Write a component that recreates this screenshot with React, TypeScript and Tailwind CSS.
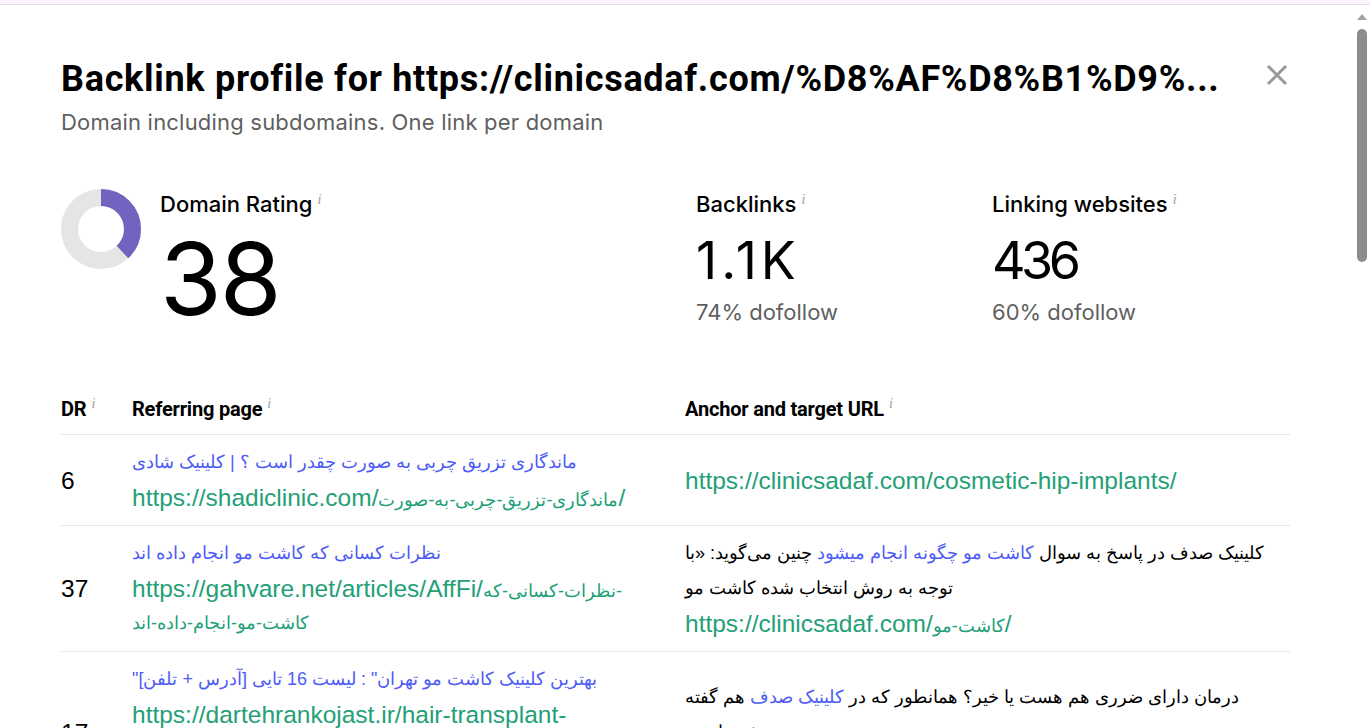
import React from 'react';

const InfoMark = () => (
  <span className="ml-[5px] relative -top-[8px] text-[14px] italic font-normal text-[#a0a0a0] font-['Liberation_Serif',serif]">
    i
  </span>
);

const Donut = ({ value }: { value: number }) => {
  const r = 31.5;
  const c = 2 * Math.PI * r;
  return (
    <svg width="80" height="80" viewBox="0 0 80 80" className="shrink-0">
      <circle cx="40" cy="40" r={r} fill="none" stroke="#e5e5e5" strokeWidth="17" />
      <circle
        cx="40"
        cy="40"
        r={r}
        fill="none"
        stroke="#7462c1"
        strokeWidth="17"
        strokeDasharray={`${(value / 100) * c} ${c}`}
        transform="rotate(-90 40 40)"
      />
    </svg>
  );
};

const Scrollbar = () => (
  <div className="w-[16px] shrink-0 bg-white flex flex-col items-center">
    <div className="mt-[9px] w-0 h-0 border-l-[5px] border-r-[5px] border-b-[6px] border-l-transparent border-r-transparent border-b-[#a3a3a3]" />
    <div className="mt-[9px] w-[10px] h-[233px] rounded-full bg-[#8c8c8c]" />
  </div>
);

const blue = 'text-[#4d5cf6]';
const green = 'text-[#23a077]';

// persian runs fall back to a wider font, so they get a smaller size
const Fa = ({ children, className = '' }: { children: React.ReactNode; className?: string }) => (
  <span className={`text-[18px] leading-none ${className}`}>{children}</span>
);

const cell = 'border-b border-[#e6e6e6] py-[10px] text-[24.5px] leading-[35px]';
const line = 'h-[35px] whitespace-nowrap';
const faLine = 'h-[35px] whitespace-nowrap text-[18px] leading-[35px]';
const head = 'pb-[10px] border-b border-[#e6e6e6] text-[20px] leading-[24px] font-bold tracking-[-0.2px] font-[Roboto,sans-serif]';

export default function App() {
  return (
    <div className="h-[728px] overflow-hidden bg-white flex flex-col">
      <div className="h-[5px] shrink-0 bg-[#fcf3fc] border-b border-[#e3dee5]" />
      <div className="flex flex-1 min-h-0">
        <main className="flex-1 min-w-0 pl-[61px] pr-[64px] pt-[51px]">
          {/* header */}
          <div className="flex items-start justify-between">
            <h1 className="whitespace-nowrap text-[36px] leading-[46px] font-bold text-black tracking-[0.7px] font-[Roboto,sans-serif]">
              Backlink profile for https://clinicsadaf.com/%D8%AF%D8%B1%D9%...
            </h1>
            <button className="mt-[6px] w-[26px] h-[26px] flex items-center justify-center">
              <svg width="24" height="24" viewBox="0 0 24 24">
                <path d="M3 3L21 21M21 3L3 21" stroke="#999999" strokeWidth="3" />
              </svg>
            </button>
          </div>
          <p className="mt-[6px] text-[22px] leading-[28px] tracking-[0.2px] text-[#5f5f5f] font-['Inter',sans-serif]">
            Domain including subdomains. One link per domain
          </p>

          {/* stats */}
          <div className="mt-[53px] flex font-['Inter',sans-serif] text-black">
            <div className="w-[635px] flex gap-[19px]">
              <Donut value={38} />
              <div>
                <div className="mt-px text-[22px] leading-[28px] font-medium">
                  Domain Rating<InfoMark />
                </div>
                <div className="mt-[7px] text-[100px] leading-[100px] tracking-[-2px]">38</div>
              </div>
            </div>
            <div className="w-[296px] pt-px">
              <div className="text-[22px] leading-[28px] font-medium">
                Backlinks<InfoMark />
              </div>
              <div className="mt-[13px] text-[52px] leading-[52px] tracking-[4px]">1.1K</div>
              <div className="mt-[11px] text-[22px] leading-[28px] text-[#5f5f5f]">74% dofollow</div>
            </div>
            <div className="pt-px">
              <div className="text-[22px] leading-[28px] font-medium">
                Linking websites<InfoMark />
              </div>
              <div className="mt-[13px] text-[52px] leading-[52px] tracking-[-4.5px]">436</div>
              <div className="mt-[11px] text-[22px] leading-[28px] text-[#5f5f5f]">60% dofollow</div>
            </div>
          </div>

          {/* table */}
          <div className="mt-[68px] grid grid-cols-[71px_553px_minmax(0,1fr)] font-['Liberation_Sans',sans-serif] text-black">
            <div className={head}>
              DR<InfoMark />
            </div>
            <div className={head}>
              Referring page<InfoMark />
            </div>
            <div className={head}>
              Anchor and target URL<InfoMark />
            </div>

            {/* row 1 */}
            <div className={`${cell} flex items-center`}>6</div>
            <div className={`${cell} pr-[20px]`}>
              <div className={`${faLine} ${blue}`}>ماندگاری تزریق چربی به صورت چقدر است ؟ | کلینیک شادی</div>
              <div className={`${line} ${green}`}>
                https://shadiclinic.com/<Fa>ماندگاری-تزریق-چربی-به-صورت</Fa>/
              </div>
            </div>
            <div className={`${cell} flex items-center`}>
              <div className={green}>https://clinicsadaf.com/cosmetic-hip-implants/</div>
            </div>

            {/* row 2 */}
            <div className={`${cell} flex items-center`}>37</div>
            <div className={`${cell} pr-[20px]`}>
              <div className={`${faLine} ${blue}`}>نظرات کسانی که کاشت مو انجام داده اند</div>
              <div className={`${line} ${green}`}>
                https://gahvare.net/articles/AffFi/<Fa>نظرات-کسانی-که-</Fa>
              </div>
              <div className={`${faLine} ${green}`}>کاشت-مو-انجام-داده-اند</div>
            </div>
            <div className={`${cell} flex items-center pr-[15px]`}>
              <div>
                <div className={faLine}>
                  کلینیک صدف در پاسخ به سوال <span className={blue}>کاشت مو چگونه انجام میشود</span> چنین می‌گوید: «با
                </div>
                <div className={faLine}>توجه به روش انتخاب شده کاشت مو</div>
                <div className={`${line} ${green}`}>
                  https://clinicsadaf.com/<Fa>کاشت-مو</Fa>/
                </div>
              </div>
            </div>

            {/* row 3 */}
            <div className={`${cell} flex items-center`}>17</div>
            <div className={`${cell} pr-[20px]`}>
              <div className={`${faLine} ${blue}`}>"بهترین کلینیک کاشت مو تهران" : لیست 16 تایی [آدرس + تلفن]</div>
              <div className={`${line} ${green}`}>https://dartehrankojast.ir/hair-transplant-</div>
              <div className={`${line} ${green}`}>clinics-in-tehran-address-and-</div>
              <div className={`${line} ${green}`}>phone/</div>
            </div>
            <div className={`${cell} flex items-center pr-[15px]`}>
              <div>
                <div className={faLine}>
                  درمان دارای ضرری هم هست یا خیر؟ همانطور که در <span className={blue}>کلینیک صدف</span> هم گفته
                </div>
                <div className={faLine}>شده است</div>
                <div className={`${line} ${green}`}>https://clinicsadaf.com/</div>
              </div>
            </div>
          </div>
        </main>
        <Scrollbar />
      </div>
    </div>
  );
}
